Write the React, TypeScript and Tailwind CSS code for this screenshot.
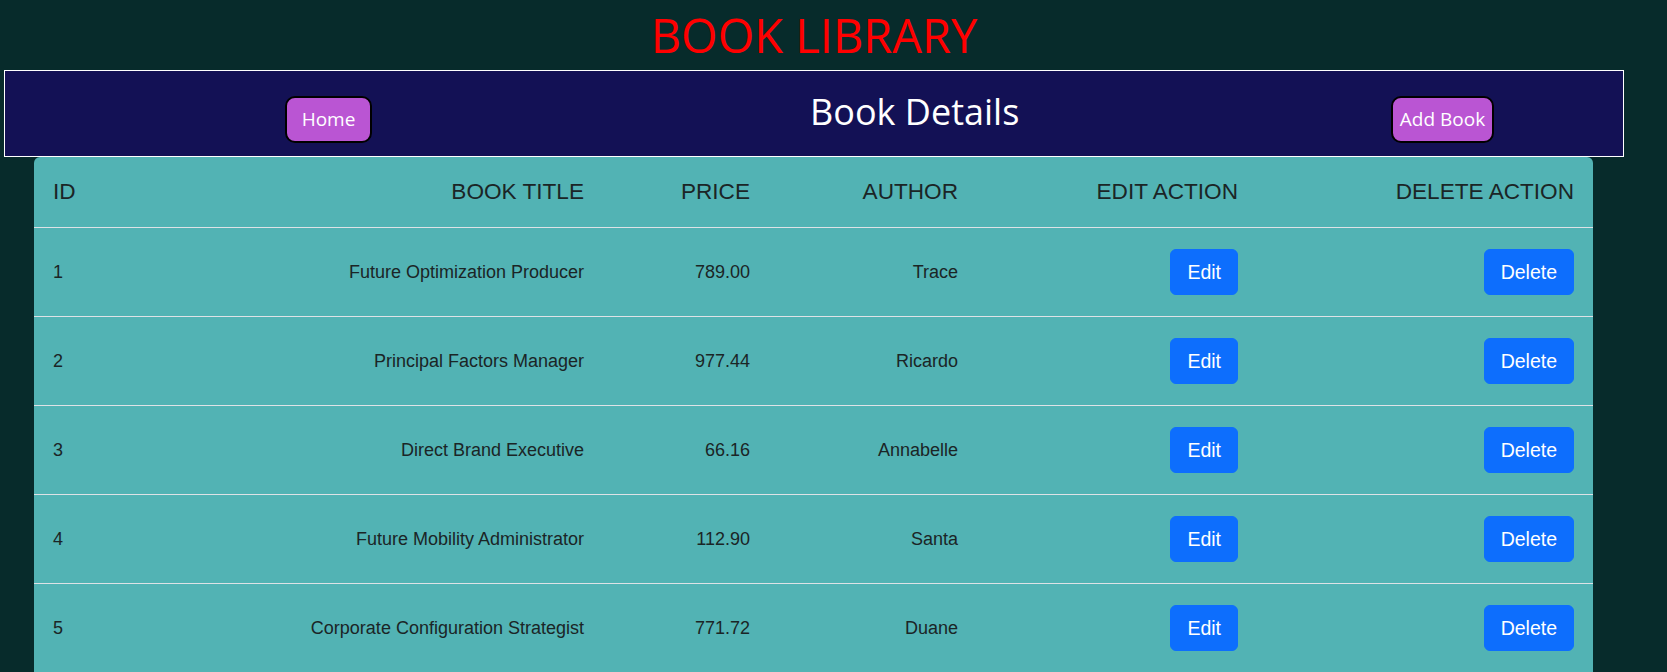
const books = [
  { id: 1, title: "Future Optimization Producer", price: "789.00", author: "Trace" },
  { id: 2, title: "Principal Factors Manager", price: "977.44", author: "Ricardo" },
  { id: 3, title: "Direct Brand Executive", price: "66.16", author: "Annabelle" },
  { id: 4, title: "Future Mobility Administrator", price: "112.90", author: "Santa" },
  { id: 5, title: "Corporate Configuration Strategist", price: "771.72", author: "Duane" },
];

const navBtn =
  "h-[47px] rounded-[10px] border-2 border-black bg-[#ba55d3] text-[19px] text-white leading-none flex items-center justify-center mt-[25px] shrink-0";

const actionBtn =
  "rounded-md border border-[#0d6efd] bg-[#0d6efd] px-4 py-2 text-[19.5px] leading-[28.8px] text-white";

const App = () => {
  return (
    <div className="min-h-screen w-full bg-[#072b2b]">
      <div className="w-[1628px]">
        <h1 className="text-center text-[47px] leading-[70px] text-[#ff0000] font-['Open_Sans',sans-serif]">
          BOOK LIBRARY
        </h1>

        <nav className="ml-[4px] flex h-[87px] w-[1620px] items-start border border-white bg-[#131155] font-['Open_Sans',sans-serif]">
          <button className={`${navBtn} ml-[280px] w-[87px]`}>Home</button>
          <div className="w-[1019px] shrink-0 pl-[438px] mt-[17px] text-[36px] leading-[48px] text-white whitespace-nowrap">
            Book Details
          </div>
          <button className={`${navBtn} w-[103px]`}>Add Book</button>
        </nav>

        <table className="ml-[34px] w-[1559px] table-fixed border-collapse overflow-hidden rounded-t-md bg-[#52b3b4] text-[#1b2526] font-['Liberation_Sans',Arial,sans-serif]">
          <thead>
            <tr className="border-b border-[#dee2e6] text-[22.6px]">
              <th className="w-[226px] px-[19px] py-[19px] text-left font-normal leading-[32px]">ID</th>
              <th className="w-[343px] px-[19px] text-right font-normal">BOOK TITLE</th>
              <th className="w-[166px] px-[19px] text-right font-normal">PRICE</th>
              <th className="w-[208px] px-[19px] text-right font-normal">AUTHOR</th>
              <th className="w-[280px] px-[19px] text-right font-normal">EDIT ACTION</th>
              <th className="w-[336px] px-[19px] text-right font-normal">DELETE ACTION</th>
            </tr>
          </thead>
          <tbody>
            {books.map((b) => (
              <tr key={b.id} className="h-[89px] border-b border-[#dee2e6] text-[18px]">
                <td className="px-[19px] text-left">{b.id}</td>
                <td className="px-[19px] text-right">{b.title}</td>
                <td className="px-[19px] text-right">{b.price}</td>
                <td className="px-[19px] text-right">{b.author}</td>
                <td className="px-[19px] text-right">
                  <button className={actionBtn}>Edit</button>
                </td>
                <td className="px-[19px] text-right">
                  <button className={actionBtn}>Delete</button>
                </td>
              </tr>
            ))}
          </tbody>
        </table>
      </div>
    </div>
  );
};

export default App;
